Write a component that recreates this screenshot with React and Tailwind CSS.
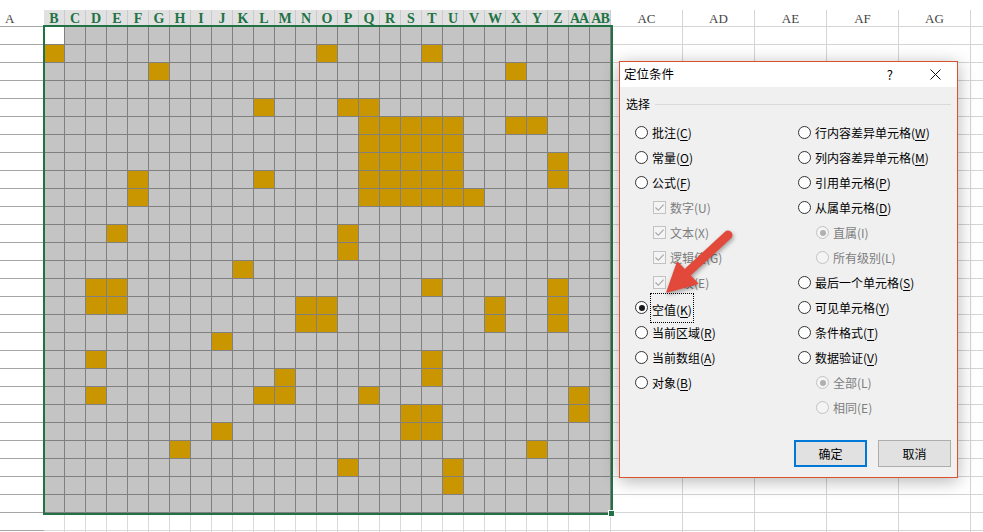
import React from 'react'

const COLS = ['B','C','D','E','F','G','H','I','J','K','L','M','N','O','P','Q','R','S','T','U','V','W','X','Y','Z','AA','AB']
const RIGHT_COLS = ['AC', 'AD', 'AE', 'AF', 'AG']

const QU = [15, 16, 17, 18, 19]
// row index -> gold column indexes (B = 0)
const GOLD = {
  1: [0, 13, 18],
  2: [5, 22],
  4: [10, 14, 15],
  5: [...QU, 22, 23],
  6: [...QU],
  7: [...QU, 24],
  8: [4, 10, ...QU, 24],
  9: [4, ...QU, 20],
  11: [3, 14],
  12: [14],
  13: [9],
  14: [2, 3, 18, 24],
  15: [2, 3, 12, 13, 21, 24],
  16: [12, 13, 21, 24],
  17: [8],
  18: [2, 18],
  19: [11, 18],
  20: [2, 10, 11, 15, 25],
  21: [17, 18, 25],
  22: [8, 17, 18],
  23: [6, 23],
  24: [14, 19],
  25: [19],
}

function cellClass(r, c) {
  if (r === 0 && c === 0) return 'bg-white'
  if ((GOLD[r] || []).includes(c)) return 'bg-[#c99600]'
  return 'bg-[#c4c4c4]'
}

function Radio({ checked, disabled }) {
  return (
    <span className={`w-[13px] h-[13px] shrink-0 rounded-full border flex items-center justify-center ${disabled ? 'border-[#c2c2c2] bg-[#f4f4f4]' : 'border-[#333] bg-white'}`}>
      {checked && <span className={`w-[6px] h-[6px] rounded-full ${disabled ? 'bg-[#b0b0b0]' : 'bg-[#1a1a1a]'}`} />}
    </span>
  )
}

function Check() {
  return (
    <span className="w-[13px] h-[13px] shrink-0 border border-[#c2c2c2] bg-[#f4f4f4] flex items-center justify-center">
      <svg width="11" height="11" viewBox="0 0 11 11">
        <path d="M1.5 5.5 L4.3 8.3 L9.6 2.6" fill="none" stroke="#a3a3a3" strokeWidth="1.1" />
      </svg>
    </span>
  )
}

function Label({ text, k, disabled }) {
  return (
    <span className={`text-[12px] leading-none whitespace-nowrap ${disabled ? 'text-[#7d7d7d]' : 'text-black'}`}>
      {text}(<span className={disabled ? '' : 'underline underline-offset-2'}>{k}</span>)
    </span>
  )
}

function Option({ type, text, k, checked, disabled, indent, focus }) {
  return (
    <div className={`flex items-center h-[25px] gap-[4px] ${indent ? 'pl-[18px]' : ''}`}>
      {type === 'check' ? <Check /> : <Radio checked={checked} disabled={disabled} />}
      {focus ? (
        <span className="-ml-[2px] px-[1px] py-[2px] border border-dotted border-black">
          <Label text={text} k={k} disabled={disabled} />
        </span>
      ) : (
        <Label text={text} k={k} disabled={disabled} />
      )}
    </div>
  )
}

const LEFT = [
  { text: '批注', k: 'C' },
  { text: '常量', k: 'O' },
  { text: '公式', k: 'F' },
  { type: 'check', text: '数字', k: 'U', disabled: true, indent: true },
  { type: 'check', text: '文本', k: 'X', disabled: true, indent: true },
  { type: 'check', text: '逻辑值', k: 'G', disabled: true, indent: true },
  { type: 'check', text: '错误', k: 'E', disabled: true, indent: true },
  { text: '空值', k: 'K', checked: true, focus: true },
  { text: '当前区域', k: 'R' },
  { text: '当前数组', k: 'A' },
  { text: '对象', k: 'B' },
]

const RIGHT = [
  { text: '行内容差异单元格', k: 'W' },
  { text: '列内容差异单元格', k: 'M' },
  { text: '引用单元格', k: 'P' },
  { text: '从属单元格', k: 'D' },
  { text: '直属', k: 'I', checked: true, disabled: true, indent: true },
  { text: '所有级别', k: 'L', disabled: true, indent: true },
  { text: '最后一个单元格', k: 'S' },
  { text: '可见单元格', k: 'Y' },
  { text: '条件格式', k: 'T' },
  { text: '数据验证', k: 'V' },
  { text: '全部', k: 'L', checked: true, disabled: true, indent: true },
  { text: '相同', k: 'E', disabled: true, indent: true },
]

function Dialog() {
  return (
    <div className="absolute left-[619px] top-[61px] w-[339px] h-[417px] border border-[#d6532c] bg-[#f0f0f0] shadow-[0_3px_16px_rgba(0,0,0,0.3)] flex flex-col">
      <div className="flex items-center h-[25px] bg-white pl-[4px] pr-[16px]">
        <span className="flex-1 text-[12.5px] text-black">定位条件</span>
        <span className="text-[13px] text-black mr-[37px]">?</span>
        <svg width="11" height="11" viewBox="0 0 11 11">
          <path d="M0.5 0.5 L10.5 10.5 M10.5 0.5 L0.5 10.5" stroke="#111" strokeWidth="1" />
        </svg>
      </div>
      <div className="flex flex-col pt-[8px] pl-[6px] pr-[6px]">
        <div className="flex items-center h-[18px]">
          <span className="text-[12px] text-black">选择</span>
          <div className="flex-1 h-px bg-[#dadada] ml-[5px]" />
        </div>
        <div className="flex mt-[7px] pl-[9px]">
          <div className="w-[162px] flex flex-col">
            {LEFT.map((o, i) => <Option key={i} {...o} />)}
          </div>
          <div className="flex flex-col pl-[1px]">
            {RIGHT.map((o, i) => <Option key={i} {...o} />)}
          </div>
        </div>
        <div className="flex justify-end gap-[11px] mt-[20px]">
          <button className="w-[73px] h-[27px] border-2 border-[#0078d7] bg-[#e1e1e1] text-[12px] text-black">确定</button>
          <button className="w-[73px] h-[27px] border border-[#adadad] bg-[#e1e1e1] text-[12px] text-black">取消</button>
        </div>
      </div>
    </div>
  )
}

function Arrow() {
  return (
    <svg className="absolute left-0 top-0 pointer-events-none drop-shadow-[1px_2px_2px_rgba(0,0,0,0.35)]" width="983" height="532">
      <line x1="728" y1="235" x2="689" y2="271" stroke="#e2493b" strokeWidth="9" strokeLinecap="round" />
      <polygon points="697.5,283.5 677.5,262.3 667,292" fill="#e2493b" stroke="#e2493b" strokeWidth="1.5" strokeLinejoin="round" />
    </svg>
  )
}

export default function App() {
  const rows = Array.from({ length: 27 }, (_, r) => r)
  return (
    <div className="relative w-[983px] h-[532px] overflow-hidden bg-white font-['Noto_Sans_CJK_SC',sans-serif]">
      <div className="h-[10px]" />
      {/* column headers */}
      <div className="flex h-[17px] font-['Liberation_Serif',serif]">
        <div className="w-[44px] border-b border-[#a6a6a6] pl-[5px] text-[13px] leading-[17px] text-[#444]">A</div>
        {COLS.map(c => (
          <div key={c} className={`w-[21px] bg-[#e1e1e1] border-r border-[#cacaca] flex items-center justify-center text-[14px] font-bold text-[#217346] leading-none ${c.length > 1 ? 'tracking-[-1px]' : ''}`}>{c}</div>
        ))}
        {RIGHT_COLS.map(c => (
          <div key={c} className="w-[72px] border-r border-b border-[#d4d4d4] flex items-center justify-center text-[13px] text-[#444] leading-none">{c}</div>
        ))}
        <div className="flex-1 border-b border-[#d4d4d4]" />
      </div>
      {/* selected block rows */}
      {rows.map(r => (
        <div key={r} className="flex h-[18px]">
          <div className="w-[44px] border-b border-[#a6a6a6]" />
          {COLS.map((c, i) => (
            <div key={c} className={`w-[21px] border-r border-b border-[#808080] ${cellClass(r, i)}`} />
          ))}
          {RIGHT_COLS.map(c => <div key={c} className="w-[72px] border-r border-b border-[#d4d4d4]" />)}
          <div className="flex-1 border-b border-[#d4d4d4]" />
        </div>
      ))}
      {[27, 28].map(r => (
        <div key={r} className="flex h-[18px]">
          <div className="w-[44px] border-b border-[#a6a6a6]" />
          {COLS.map(c => <div key={c} className="w-[21px] border-r border-b border-[#dadada]" />)}
          {RIGHT_COLS.map(c => <div key={c} className="w-[72px] border-r border-b border-[#d4d4d4]" />)}
          <div className="flex-1 border-b border-[#d4d4d4]" />
        </div>
      ))}
      {/* selection outline */}
      <div className="absolute left-[43px] top-[25px] w-[570px] h-[490px] border-2 border-[#217346] pointer-events-none" />
      <div className="absolute left-[608px] top-[510px] w-[7px] h-[7px] bg-[#217346] border border-white" />
      <Dialog />
      <Arrow />
    </div>
  )
}
